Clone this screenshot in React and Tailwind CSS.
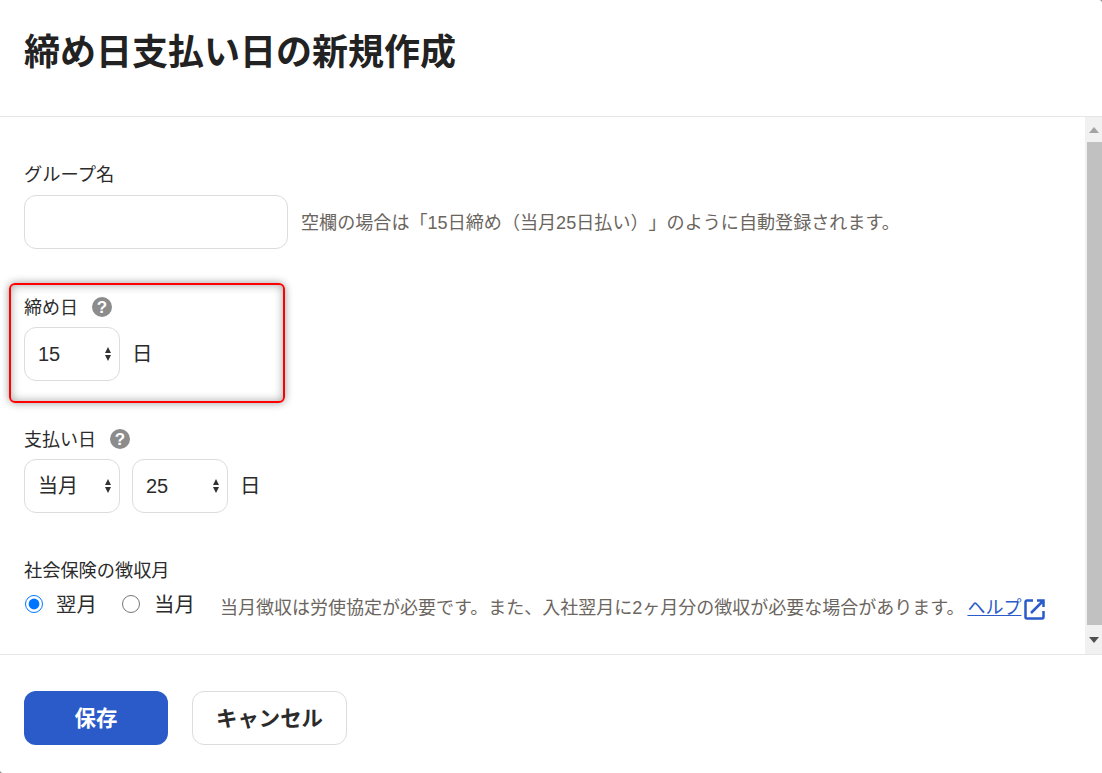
const jp = "font-['Liberation_Sans','Noto_Sans_CJK_JP',sans-serif]";

function Help() {
  return (
    <svg viewBox="0 0 20 20" className="w-5 h-5 ml-[14px]">
      <circle cx="10" cy="10" r="10" fill="#8c8c8c" />
      <text x="10" y="16" textAnchor="middle" fontSize="17" fontWeight="700" fontFamily="Liberation Sans" fill="#fff">?</text>
    </svg>
  );
}

function Select({ value }) {
  return (
    <div className="relative w-24 h-[54px]">
      <select
        defaultValue={value}
        className="appearance-none w-full h-full border border-[#dcdcdc] rounded-xl pl-[13px] bg-white text-[20px] text-[#2b2b2b]"
      >
        <option>{value}</option>
      </select>
      <svg viewBox="0 0 6 14" className="absolute right-[9px] top-5 w-[6px] h-[14px]">
        <path d="M3 0 6 6H0zM0 8h6l-3 6z" fill="#333" />
      </svg>
    </div>
  );
}

export default function App() {
  return (
    <div className="h-[773px] w-[1102px] bg-[#808080] overflow-hidden relative">
      <div className={`h-full bg-white rounded-tr-[3px] rounded-bl-[3px] text-[#2b2b2b] overflow-hidden [text-spacing-trim:space-all] ${jp}`}>
        <div className="h-[117px] border-b border-[#e6e6e6] pt-[26px] pl-6">
          <h1 className="text-[36px] leading-[54px] font-bold text-[#222]">締め日支払い日の新規作成</h1>
        </div>

        <div className="flex h-[537px]">
          <div className="flex-1 pl-6 pt-[45px]">
            <label className="block text-[18.25px] leading-[26px]">グループ名</label>
            <div className="flex items-center mt-[7px]">
              <input className="w-[264px] h-[54px] border border-[#dcdcdc] rounded-xl" />
              <span className="ml-[13px] pt-[4px] text-[18.08px] text-[#6b6560]">空欄の場合は「15日締め（当月25日払い）」のように自動登録されます。</span>
            </div>

            <div className="flex items-center mt-[45px] h-[26px] text-[18px]">
              <span className="pt-[2px]">締め日</span>
              <Help />
            </div>
            <div className="flex items-center mt-[7px]">
              <Select value="15" />
              <span className="ml-[12px] text-[20.5px]">日</span>
            </div>

            <div className="flex items-center mt-[45px] h-[26px] text-[18px]">
              <span className="pt-[2px]">支払い日</span>
              <Help />
            </div>
            <div className="flex items-center gap-3 mt-[7px]">
              <Select value="当月" />
              <Select value="25" />
              <span className="text-[20.5px]">日</span>
            </div>

            <div className="mt-[45px] text-[18.2px] leading-[26px]">社会保険の徴収月</div>
            <div className="flex items-center mt-[6px] h-[30px]">
              <label className="flex items-center text-[20.5px] ml-px">
                <input type="radio" name="month" defaultChecked className="w-[18px] h-[18px] mb-[2px] accent-[#0075ff]" />
                <span className="ml-[13px]">翌月</span>
              </label>
              <label className="flex items-center text-[20.5px] ml-[25px]">
                <input type="radio" name="month" className="w-[18px] h-[18px] mb-[2px]" />
                <span className="ml-[14px]">当月</span>
              </label>
              <span className="ml-[25px] pt-[7px] text-[18px] text-[#6b6560]">当月徴収は労使協定が必要です。また、入社翌月に2ヶ月分の徴収が必要な場合があります。</span>
              <a href="#" className="ml-[3px] pt-[7px] text-[18px] text-[#2a5bc8] underline">ヘルプ</a>
              <svg viewBox="0 0 21 21" className="w-[21px] h-[21px] ml-[3px] mt-[8px]" fill="none" stroke="#2a5bc8" strokeWidth="2.5">
                <path d="M9 1.5H3A1.5 1.5 0 0 0 1.5 3v15A1.5 1.5 0 0 0 3 19.5h15a1.5 1.5 0 0 0 1.5-1.5v-6" />
                <path d="M13 1.5h6.5V8M19 2 7 14" />
              </svg>
            </div>
          </div>

          <div className="w-[17px] bg-[#f1f1f1] flex flex-col items-end">
            <div className="h-[25px] w-full flex justify-center items-center">
              <svg viewBox="0 0 10 6" className="w-[10px] h-[6px]"><path d="M5 0 10 6H0z" fill="#a3a3a3" /></svg>
            </div>
            <div className="h-[483px] w-[15px] bg-[#c1c1c1]"></div>
            <div className="flex-1 w-full flex justify-center items-center">
              <svg viewBox="0 0 10 6" className="w-[10px] h-[6px]"><path d="M0 0h10L5 6z" fill="#505050" /></svg>
            </div>
          </div>
        </div>

        <div className="h-[119px] border-t border-[#e6e6e6] pt-[36px] pl-6 flex gap-6 items-start">
          <button className="w-36 h-[54px] pt-[2px] rounded-xl bg-[#2a5bc8] text-white text-[21.4px] font-bold">保存</button>
          <button className="w-[155px] h-[54px] pt-[2px] rounded-xl bg-white border border-[#dcdcdc] text-[21.4px] font-bold">キャンセル</button>
        </div>
      </div>

      {/* annotation drawn over the dialog */}
      <div className="absolute left-[9px] top-[283px] w-[276px] h-[120px] border-2 border-[#f00] rounded-md shadow-[0_0_8px_rgba(0,0,0,0.4),inset_0_0_10px_rgba(0,0,0,0.35)] pointer-events-none"></div>
    </div>
  );
}
